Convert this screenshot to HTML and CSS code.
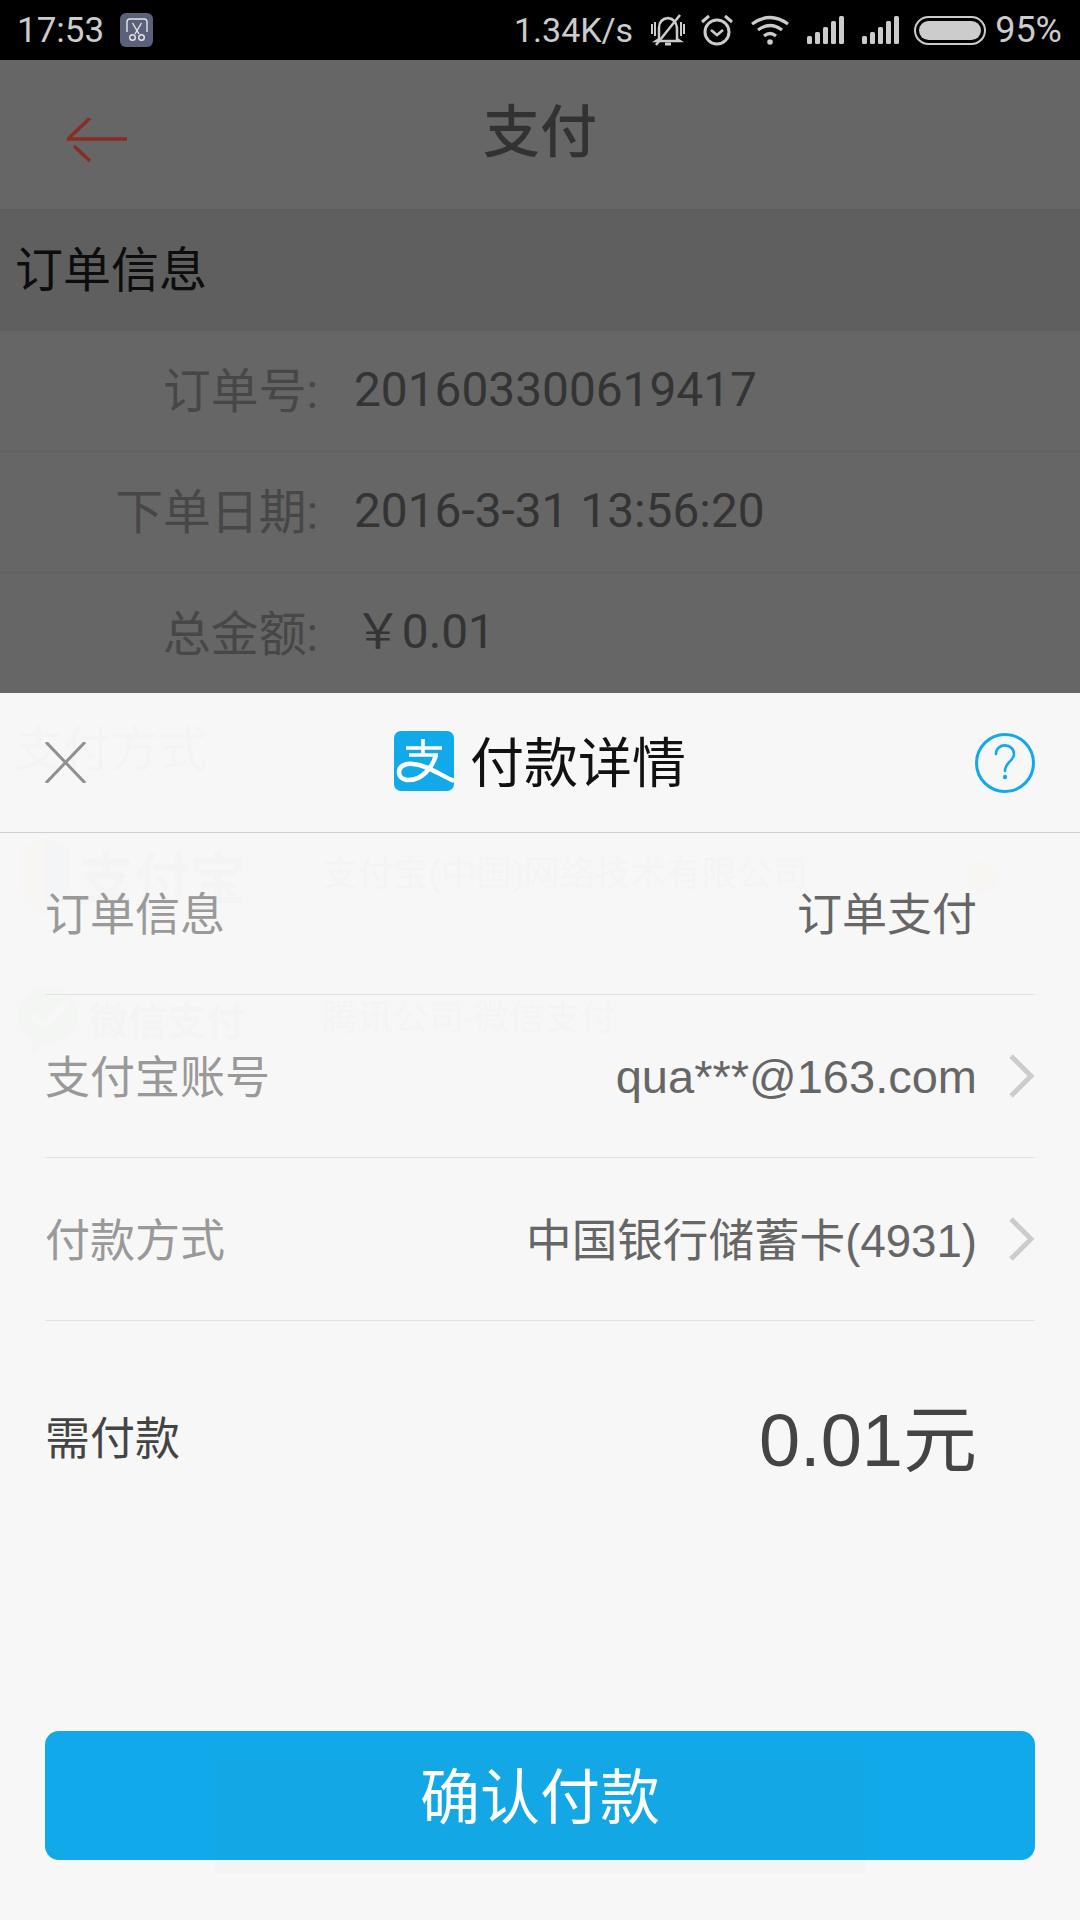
FILE: index.html
```html
<!DOCTYPE html>
<html lang="zh-CN">
<head>
<meta charset="utf-8">
<title>支付</title>
<link rel="stylesheet" href="styles.css">
</head>
<body>
<div class="phone">
  <header class="status">
    <div class="status-left">
      <span class="time">17:53</span>
      <span class="notif">
        <svg width="26" height="26" viewBox="0 0 26 26" fill="none" stroke="#e6e6ea" stroke-width="1.400"><path d="M3 15V5q0-3 3-3h14q3 0 3 3v10"/><path d="M8.500 6l6.500 11M17.500 6l-6.500 11"/><circle cx="8.500" cy="20.500" r="2.800"/><circle cx="17.500" cy="20.500" r="2.800"/></svg>
      </span>
    </div>
    <div class="status-right">
      <span class="speed">1.34K/s</span>
      <svg class="s-bell" width="34" height="34" viewBox="0 0 34 34" fill="none" stroke="#ccc" stroke-width="2.500"><path d="M8 26V15q0-9 9-10 8 1 9 10v11l3 2H5z"/><path d="M14 31h6" stroke-width="3"/><path d="M1 11v10M4 9v14M30 9v14M33 11v10" stroke-width="2"/><path d="M5 32L29 2" stroke-width="2.500"/></svg>
      <svg class="s-alarm" width="34" height="34" viewBox="0 0 34 34" fill="none" stroke="#ccc" stroke-width="3"><circle cx="17" cy="19" r="12"/><path d="M11 17l6 5 6-5" stroke-width="2.500"/><path d="M2 9l7-6M32 9l-7-6" stroke-width="3"/></svg>
      <svg class="s-wifi" width="38" height="32" viewBox="0 0 38 32" fill="none" stroke="#ccc" stroke-width="3.200"><path d="M1 10q18-13 36 0M7 16q12-9 24 0M13 22q6-5 12 0"/><circle cx="19" cy="28" r="2.800" fill="#ccc" stroke="none"/></svg>
      <svg class="s-sig" width="37" height="28" viewBox="0 0 37 28" fill="#ccc"><rect x="0" y="20" width="5" height="8" rx="1.500"/><rect x="8" y="16" width="5" height="12" rx="1.500"/><rect x="16" y="11" width="5" height="17" rx="1.500"/><rect x="24" y="5" width="5" height="23" rx="1.500"/><rect x="32" y="0" width="5" height="28" rx="1.500"/></svg>
      <svg class="s-sig" width="37" height="28" viewBox="0 0 37 28" fill="#ccc"><rect x="0" y="20" width="5" height="8" rx="1.500"/><rect x="8" y="16" width="5" height="12" rx="1.500"/><rect x="16" y="11" width="5" height="17" rx="1.500"/><rect x="24" y="5" width="5" height="23" rx="1.500"/><rect x="32" y="0" width="5" height="28" rx="1.500"/></svg>
      <span class="battery"><span class="battery-fill"></span></span>
      <span class="pct">95%</span>
    </div>
  </header>

  <main class="page">
    <div class="toolbar">
      <svg class="back" width="60" height="44" viewBox="0 0 60 44" fill="none" stroke="#8a2c22" stroke-width="3.500"><path d="M60 21H1L23 0"/><path d="M7 28l16 15"/></svg>
      <h1 class="toolbar-title">支付</h1>
    </div>
    <div class="section">订单信息</div>
    <div class="info-row"><span class="info-label">订单号:</span><span class="info-value">201603300619417</span></div>
    <div class="info-row"><span class="info-label">下单日期:</span><span class="info-value">2016-3-31 13:56:20</span></div>
    <div class="info-row info-last"><span class="info-label">总金额:</span><span class="info-value info-money">￥0.01</span></div>
    <div class="section section-pay">支付方式</div>
    <div class="pay-row">
      <div class="brand">
        <svg class="shield" width="50" height="78" viewBox="0 0 50 78"><path d="M25 0L0 10v32q2 24 25 36z" fill="#f6d592"/><path d="M25 0l25 10v32q-2 24-25 36z" fill="#a6bcd8"/></svg>
        <span class="brand-alipay">支付宝</span>
      </div>
      <span class="pay-desc">支付宝(中国)网络技术有限公司</span>
      <span class="radio radio-on"></span>
    </div>
    <div class="pay-row">
      <div class="brand">
        <svg class="wx" width="62" height="72" viewBox="0 0 62 72"><path d="M31 2C14 2 1 14 1 30c0 11 6 20 15 25l-2 15 14-12h3c17 0 30-12 30-28S48 2 31 2z" fill="#a9d8ab"/><path d="M16 30l11 11 22-22" fill="none" stroke="#fff" stroke-width="7"/></svg>
        <span class="brand-wx">微信支付</span>
      </div>
      <span class="pay-desc">腾讯公司-微信支付</span>
      <span class="radio"></span>
    </div>
    <div class="pay-foot"><span class="pay-submit"></span></div>
  </main>

  <div class="scrim"></div>

  <section class="sheet">
    <div class="sheet-head">
      <span class="head-side">
        <svg width="41" height="41" viewBox="0 0 41 41" fill="none" stroke="#909090" stroke-width="3"><path d="M1 0l39 41M40 0L1 41"/></svg>
      </span>
      <div class="sheet-title">
        <svg width="60" height="60" viewBox="0 0 60 60"><rect width="60" height="60" rx="7" fill="#11a9ea"/><g fill="none" stroke="#fff"><path d="M12 17h36M29 8v15M15 24h29" stroke-width="3.600"/><path d="M42 24c-4 14-15 25-27 25C8 49 5 45 5 41c0-5 5-9 14-8 14 1 27 11 41 17" stroke-width="4.500"/></g></svg>
        <span class="sheet-title-text">付款详情</span>
      </div>
      <span class="head-side">
        <svg width="60" height="60" viewBox="0 0 60 60" fill="none" stroke="#11a9ea" stroke-width="3"><circle cx="30" cy="30" r="28.500"/><path d="M21 21c0-12 18-11 18 0 0 7-9 8-9 17" stroke-width="2.600" stroke-linecap="round"/><circle cx="30" cy="44" r="2.200" fill="#11a9ea" stroke="none"/></svg>
      </span>
    </div>
    <div class="d-row d-first">
      <span class="d-label">订单信息</span>
      <span class="d-value d-nochev">订单支付</span>
    </div>
    <div class="d-row">
      <span class="d-label">支付宝账号</span>
      <span class="d-value d-latin">qua***@163.com</span>
      <svg class="chev" width="26" height="44" viewBox="0 0 26 44" fill="none" stroke="#ccc" stroke-width="5"><path d="M2 2l20 20L2 42"/></svg>
    </div>
    <div class="d-row">
      <span class="d-label">付款方式</span>
      <span class="d-value">中国银行储蓄卡(4931)</span>
      <svg class="chev" width="26" height="44" viewBox="0 0 26 44" fill="none" stroke="#ccc" stroke-width="5"><path d="M2 2l20 20L2 42"/></svg>
    </div>
    <div class="total">
      <span class="total-label">需付款</span>
      <span class="total-value">0.01元</span>
    </div>
    <button class="confirm" type="button"><span class="confirm-text">确认付款</span></button>
  </section>
</div>
</body>
</html>
```
FILE: styles.css
```css
* { box-sizing: border-box; }
html, body { margin: 0; padding: 0; background: #fff; }
.phone {
  position: relative;
  width: 1080px;
  height: 1920px;
  overflow: hidden;
  display: flex;
  flex-direction: column;
  font-family: Roboto, "Noto Sans CJK SC", sans-serif;
}

/* status bar */
.status {
  position: relative;
  z-index: 3;
  flex: none;
  height: 60px;
  background: #000;
  color: #ccc;
  display: flex;
  align-items: center;
  justify-content: space-between;
  padding: 0 18px 0 17px;
  font-size: 34px;
}
.status-left, .status-right { display: flex; align-items: center; }
.time { font-size: 35px; }
.notif {
  width: 33px;
  height: 34px;
  margin-left: 16px;
  border-radius: 6px;
  background: #5a6178;
  display: flex;
  align-items: center;
  justify-content: center;
}
.s-bell { margin-left: 18px; }
.s-alarm { margin-left: 15px; }
.s-wifi { margin-left: 17px; }
.s-sig { margin-left: 18px; }
.battery {
  width: 72px;
  height: 29px;
  margin-left: 15px;
  border: 2.500px solid #ccc;
  border-radius: 15px;
  padding: 3px;
  display: flex;
}
.battery-fill { flex: 1; background: #ccc; border-radius: 10px; }
.pct { margin-left: 9px; font-size: 36px; }

/* page under the sheet */
.page { flex: 1; display: flex; flex-direction: column; }
.toolbar {
  position: relative;
  flex: none;
  height: 150px;
  border-bottom: 1px solid #e0e0e0;
  display: flex;
  align-items: center;
  justify-content: center;
}
.back { position: absolute; z-index: 3; left: 67px; top: 58px; }
.toolbar-title {
  margin: 0;
  padding-bottom: 5px;
  font-size: 57px;
  font-weight: 500;
  color: #7e7e7e;
  line-height: 1;
}
.section {
  flex: none;
  height: 121px;
  background: #ededed;
  color: #222;
  font-size: 48px;
  padding: 0 0 9px 15px;
  display: flex;
  align-items: center;
}
.info-row {
  flex: none;
  height: 121px;
  border-bottom: 1px solid #f2f2f2;
  display: flex;
  align-items: center;
  gap: 36px;
  font-size: 47.800px;
}
.info-last { border-bottom: 0; }
.info-label { width: 318px; padding-bottom: 7px; text-align: right; color: #b2b2b2; }
.info-value { padding-bottom: 2px; color: #828282; }
.info-money { padding-bottom: 12px; }
.section-pay { background: #f0f0f0; color: #aaa; height: 111px; }
.pay-row {
  flex: none;
  height: 144px;
  display: flex;
  align-items: center;
}
.brand { width: 322px; display: flex; align-items: center; }
.shield { margin-left: 20px; }
.brand-alipay { margin-left: 8px; padding-bottom: 6px; font-size: 56px; font-weight: 700; color: #aaa; }
.wx { margin-left: 17px; }
.brand-wx { margin-left: 10px; padding-bottom: 6px; font-size: 39px; font-weight: 700; color: #aaa; }
.pay-desc { flex: 1; padding-bottom: 14px; font-size: 35.500px; color: #aaa; }
.radio {
  width: 56px;
  height: 56px;
  margin-right: 70px;
  border: 1px solid #ccc;
  border-radius: 50%;
  display: flex;
  align-items: center;
  justify-content: center;
}
.radio-on::after {
  content: "";
  width: 32px;
  height: 32px;
  border-radius: 50%;
  background: #f8d8a0;
}
.pay-foot { margin-top: auto; padding-bottom: 47px; display: flex; justify-content: center; }
.pay-submit {
  width: 650px;
  height: 115px;
  background: #c0b8ac;
}

.scrim {
  position: absolute;
  z-index: 1;
  left: 0;
  right: 0;
  top: 60px;
  height: 633px;
  background: rgba(0, 0, 0, .6);
}

/* sheet */
.sheet {
  position: absolute;
  z-index: 2;
  left: 0;
  right: 0;
  bottom: 0;
  height: 1227px;
  background: rgba(247, 247, 247, .96);
  display: flex;
  flex-direction: column;
  font-family: "Liberation Sans", "Noto Sans CJK SC", sans-serif;
  color: #666;
}
.sheet-head {
  flex: none;
  height: 140px;
  border-bottom: 1px solid #d0d0d0;
  padding: 0 45px;
  display: flex;
  align-items: center;
  justify-content: space-between;
}
.head-side { width: 60px; display: flex; }
.sheet-title {
  display: flex;
  align-items: center;
  gap: 16px;
  margin-bottom: 3px;
  font-size: 54px;
  color: #111;
}
.sheet-title-text { padding-bottom: 4px; }
.d-row {
  flex: none;
  height: 163px;
  margin: 0 45px;
  border-bottom: 1px solid #e2e2e2;
  display: flex;
  align-items: center;
  font-size: 45.600px;
}
.d-first { height: 162px; }
.d-label { padding-bottom: 4px; font-size: 45px; color: #999; margin-right: auto; }
.d-value { padding-bottom: 4px; color: #666; }
.d-nochev { margin-right: 58px; font-size: 45px; }
.d-latin { padding-bottom: 0; font-size: 47px; }
.chev { margin-left: 32px; }
.total {
  flex: none;
  height: 236px;
  margin: 0 103px 0 45px;
  display: flex;
  align-items: center;
  justify-content: space-between;
}
.total-label { padding-bottom: 7px; font-size: 45px; color: #444; }
.total-value { padding-bottom: 12px; font-size: 74px; color: #444; }
.confirm {
  position: relative;
  flex: none;
  height: 129px;
  margin: auto 45px 60px;
  border: 0;
  border-radius: 14px;
  background: #11a9ea;
  color: #fff;
  font: inherit;
  font-size: 60px;
  padding: 0 0 6px;
}
.confirm::before {
  content: "";
  position: absolute;
  left: 171px;
  width: 650px;
  top: 27px;
  bottom: 0;
  background: rgba(120, 90, 50, .025);
}
.confirm-text { position: relative; }
```
